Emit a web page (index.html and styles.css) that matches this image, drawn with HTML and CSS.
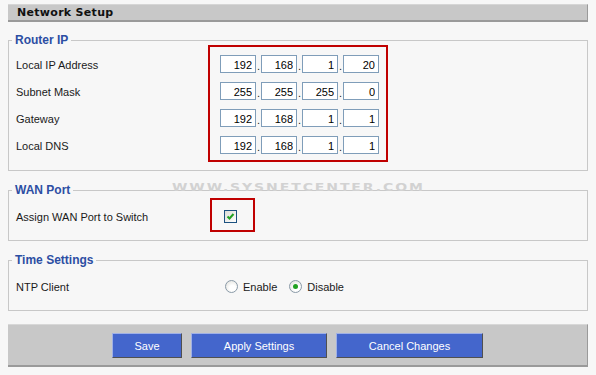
FILE: index.html
```html
<!DOCTYPE html>
<html lang="en">
<head>
<meta charset="UTF-8">
<title>Network Setup</title>
<link rel="stylesheet" href="styles.css">
</head>
<body>
<div class="page">
    <div class="title">Network Setup</div>

    <fieldset class="group router">
        <legend>Router IP</legend>
        <div class="split">
            <div class="labels">
                <div class="row">Local IP Address</div>
                <div class="row">Subnet Mask</div>
                <div class="row">Gateway</div>
                <div class="row">Local DNS</div>
            </div>
            <div class="ipcol">
                <div class="row"><input class="oct" value="192"><span class="dot">.</span><input class="oct" value="168"><span class="dot">.</span><input class="oct" value="1"><span class="dot">.</span><input class="oct" value="20"></div>
                <div class="row"><input class="oct" value="255"><span class="dot">.</span><input class="oct" value="255"><span class="dot">.</span><input class="oct" value="255"><span class="dot">.</span><input class="oct" value="0"></div>
                <div class="row"><input class="oct" value="192"><span class="dot">.</span><input class="oct" value="168"><span class="dot">.</span><input class="oct" value="1"><span class="dot">.</span><input class="oct" value="1"></div>
                <div class="row"><input class="oct" value="192"><span class="dot">.</span><input class="oct" value="168"><span class="dot">.</span><input class="oct" value="1"><span class="dot">.</span><input class="oct" value="1"></div>
            </div>
        </div>
    </fieldset>

    <fieldset class="group">
        <legend>WAN Port</legend>
        <div class="row">
            <div class="label">Assign WAN Port to Switch</div>
            <span class="check marked">
                <svg width="11" height="11" viewBox="0 0 11 11"><path d="M2.5 5.5 L4.5 7.5 L8.5 3" fill="none" stroke="#21a121" stroke-width="2"/></svg>
            </span>
        </div>
    </fieldset>

    <fieldset class="group">
        <legend>Time Settings</legend>
        <div class="row">
            <div class="label">NTP Client</div>
            <span class="radio"></span><span class="opt">Enable</span>
            <span class="radio on"></span><span class="opt">Disable</span>
        </div>
    </fieldset>

    <div class="actions">
        <button class="btn save">Save</button>
        <button class="btn apply">Apply Settings</button>
        <button class="btn cancel">Cancel Changes</button>
    </div>

    <div class="watermark">WWW.SYSNETCENTER.COM</div>
</div>
</body>
</html>
```

FILE: styles.css
```css
* { margin:0; padding:0; box-sizing:border-box; }
body {
    background: #f7f7f7;
    font-family: 'Liberation Sans', Arial, sans-serif;
    font-size: 11px;
    color: #1a1a1a;
}
.page {
    position: relative;
    width: 596px;
    padding: 4px 8px 0;
}
.title {
    height: 18px;
    background: #c8c8c8;
    border-top: 1px solid #d6d6d6;
    border-bottom: 2px solid #9a9a9a;
    border-right: 1px solid #9a9a9a;
    padding-left: 9px;
    font-family: 'DejaVu Sans', Verdana, sans-serif;
    font-weight: bold;
    font-size: 11px;
    line-height: 16px;
    letter-spacing: 0.3px;
    color: #111;
}
.group {
    margin-top: 12px;
    border: 1px solid #c8c8c8;
    padding: 10px 7px 15px;
}
.group legend {
    margin-left: -4px;
    padding: 0 3px;
    font-weight: bold;
    font-size: 12px;
    line-height: 14px;
    color: #2c4ea3;
}
.router {
    margin-top: 11px;
    padding-top: 8px;
    padding-bottom: 16px;
}
.split { display: flex; }
.labels, .ipcol {
    display: flex;
    flex-direction: column;
    gap: 9px;
}
.labels { width: 204px; }
.row {
    display: flex;
    align-items: center;
    height: 18px;
    line-height: 18px;
}
.labels .row, .label, .opt { padding-top: 2px; }
.label { width: 208px; }
.ipcol { position: relative; }
.ipcol::after {
    content: '';
    position: absolute;
    top: -10px; left: -12px; right: -9px; bottom: -8px;
    border: 2px solid #c00000;
    pointer-events: none;
}
.oct {
    width: 36px;
    height: 18px;
    border: 1px solid #7f9db9;
    background: #fff;
    padding: 1px 3px 0;
    text-align: right;
    font-family: 'Liberation Sans', Arial, sans-serif;
    font-size: 11px;
    color: #000;
}
.dot {
    width: 5px;
    align-self: flex-end;
    line-height: 14px;
    padding-left: 1px;
}
.check {
    position: relative;
    display: flex;
    align-items: center;
    justify-content: center;
    width: 13px;
    height: 13px;
    border: 1px solid #1c5180;
    background: linear-gradient(135deg, #dcdcd6, #fff);
}
.check::after {
    content: '';
    position: absolute;
    top: -13px; left: -15px; right: -19px; bottom: -10px;
    border: 2px solid #c00000;
}
.radio {
    width: 13px;
    height: 13px;
    margin-left: 1px;
    border: 1px solid #8a9aa8;
    border-radius: 50%;
    background: radial-gradient(circle at 60% 65%, #fff 30%, #dcdcd6 100%);
    display: flex;
    align-items: center;
    justify-content: center;
}
.radio.on::after {
    content: '';
    width: 5px;
    height: 5px;
    border-radius: 50%;
    background: #21a121;
}
.opt {
    margin-left: 5px;
    margin-right: 11px;
}
.actions {
    margin-top: 13px;
    display: flex;
    justify-content: center;
    gap: 9px;
    background: #c8c8c8;
    border-top: 1px solid #d8d8d8;
    border-right: 1px solid #9a9a9a;
    border-bottom: 2px solid #9a9a9a;
    padding: 8px 0 7px;
}
.btn {
    height: 25px;
    background: #4466cc;
    color: #fff;
    font-family: 'Liberation Sans', Arial, sans-serif;
    font-size: 11px;
    border: 1px solid;
    border-color: #9fb0e6 #505050 #505050 #9fb0e6;
    cursor: pointer;
}
.save { width: 70px; }
.apply { width: 136px; }
.cancel { width: 147px; }
.watermark {
    position: absolute;
    left: 172px;
    top: 179px;
    font-family: 'DejaVu Sans', sans-serif;
    font-weight: bold;
    font-size: 14px;
    letter-spacing: 1.9px;
    transform: scaleY(0.8);
    transform-origin: left center;
    color: #d2d2d2;
    pointer-events: none;
}
```
